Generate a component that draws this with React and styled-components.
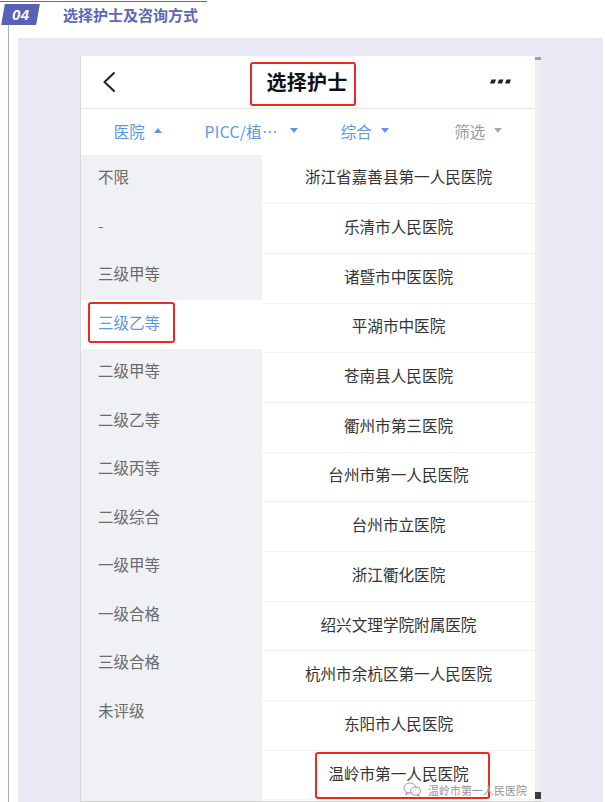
import React from 'react';
import styled, { createGlobalStyle, css } from 'styled-components';

const GlobalStyle = createGlobalStyle`
  html, body {
    margin: 0;
    padding: 0;
    background: #ffffff;
  }
  body {
    font-family: "Noto Sans CJK SC", "Noto Sans", sans-serif;
  }
  * {
    box-sizing: border-box;
  }
`;

const BLUE = '#5a98e6';

const Page = styled.div`
  width: 605px;
  height: 802px;
  overflow: hidden;
  padding-top: 1px;
  display: flex;
  flex-direction: column;
`;

const SectionHead = styled.div`
  width: 207px;
  border-top: 1.5px solid #5d68bd;
  display: flex;
  align-items: center;
  padding-top: 1.5px;
`;

const Badge = styled.div`
  width: 35px;
  height: 21px;
  margin-left: 3px;
  background: #5662b6;
  transform: skewX(-10deg);
  display: flex;
  align-items: center;
  justify-content: center;

  span {
    transform: skewX(10deg);
    color: #ffffff;
    font-family: "Liberation Sans", Arial, sans-serif;
    font-style: italic;
    font-weight: bold;
    font-size: 15px;
    letter-spacing: 0.5px;
  }
`;

const SectionTitle = styled.h2`
  margin: 0 0 0 25px;
  font-size: 15px;
  font-weight: bold;
  color: #5b66b9;
  line-height: 21px;
`;

const Rail = styled.div`
  flex: 1;
  margin-left: 8px;
  border-left: 1px solid #a4abe0;
  padding: 13px 0 0 9px;
  display: flex;
`;

const Panel = styled.div`
  width: 585px;
  background: #e8e9f4;
  padding: 18px 0 0 62px;
  display: flex;
`;

const Phone = styled.div`
  display: flex;
  height: 746px;
  border-bottom: 1px solid #cfcfcf;
  background: #ffffff;
`;

const Screen = styled.div`
  position: relative;
  width: 455px;
  border-left: 1px solid #d9d9d9;
  background: #ffffff;
  display: flex;
  flex-direction: column;
  overflow: hidden;
`;

const Scrollbar = styled.div`
  position: relative;
  width: 6px;
  background: #efefef;
  display: flex;
  flex-direction: column;
  justify-content: space-between;
  padding: 1px 0 2px;

  &::before {
    content: '';
    height: 3px;
    background: #a0a0a0;
  }
  &::after {
    content: '';
    height: 7px;
    background: #3a3a3a;
  }
`;

const NavBar = styled.div`
  height: 53px;
  border-bottom: 1px solid #e6e6e6;
  display: grid;
  grid-template-columns: 1fr auto 1fr;
  align-items: center;
  padding: 0 23px 0 21px;
`;

const NavTitle = styled.h1`
  margin: 0;
  font-size: 20px;
  line-height: 28px;
  font-weight: bold;
  color: #111111;
  letter-spacing: 0.3px;
`;

const Marked = styled.span`
  position: relative;
  display: inline-block;

  &::after {
    content: '';
    position: absolute;
    top: ${(p) => p.$t}px;
    right: ${(p) => p.$r}px;
    bottom: ${(p) => p.$b}px;
    left: ${(p) => p.$l}px;
    border: 2px solid #ea2a1f;
    border-radius: 3px;
    pointer-events: none;
  }
`;

const NavSide = styled.div`
  display: flex;
  justify-content: ${(p) => (p.$end ? 'flex-end' : 'flex-start')};
  align-items: center;
`;

const FilterBar = styled.div`
  height: 46px;
  display: grid;
  grid-template-columns: repeat(4, 1fr);
  align-items: center;
  padding-bottom: 2px;
`;

const FilterItem = styled.div`
  display: flex;
  align-items: center;
  justify-content: center;
  gap: ${(p) => (p.$wide ? 12 : 9)}px;
  font-size: 15.5px;
  letter-spacing: ${(p) => (p.$wide ? 0.4 : 0)}px;
  color: ${(p) => (p.$muted ? '#9a9a9a' : BLUE)};
`;

const Caret = styled.i`
  width: 0;
  height: 0;
  border-left: 4px solid transparent;
  border-right: 4px solid transparent;
  ${(p) =>
    p.$up
      ? css`
          border-bottom: 5px solid ${p.$muted ? '#a8a8a8' : BLUE};
        `
      : css`
          border-top: 5px solid ${p.$muted ? '#a8a8a8' : BLUE};
        `}
`;

const Lists = styled.div`
  flex: 1;
  display: flex;
`;

const Levels = styled.ul`
  margin: 0;
  padding: 0;
  list-style: none;
  width: 181px;
  background: #f0f1f5;
`;

const Level = styled.li`
  height: 48.5px;
  display: flex;
  align-items: center;
  padding: 0 0 5px 17px;
  font-size: 15.5px;
  color: ${(p) => (p.$active ? BLUE : '#6a6a6a')};
  background: ${(p) => (p.$active ? '#ffffff' : 'transparent')};
`;

const Hospitals = styled.ul`
  margin: 0;
  padding: 0;
  list-style: none;
  flex: 1;
`;

const Hospital = styled.li`
  height: 49.7px;
  border-bottom: 1px solid #f1f1f1;
  display: flex;
  align-items: center;
  justify-content: center;
  padding-bottom: 5px;
  font-size: 15.6px;
  color: #333333;
`;

const Watermark = styled.div`
  position: absolute;
  right: 8px;
  bottom: 3px;
  display: flex;
  align-items: center;
  gap: 6px;
  font-size: 11px;
  color: rgba(110, 110, 110, 0.75);
  text-shadow: 0 0 1px #ffffff;
`;

const BackIcon = () => (
  <svg width="14" height="22" viewBox="0 0 14 22">
    <path d="M12 2 L2.5 11 L12 20" fill="none" stroke="#222" strokeWidth="2" strokeLinecap="round" strokeLinejoin="round" />
  </svg>
);

const MoreIcon = () => (
  <svg width="22" height="5" viewBox="0 0 22 5">
    <path d="M1.5 0.5h4.5l-1.5 4h-4.5z M9 0.5h4.5l-1.5 4h-4.5z M16.5 0.5h4.5l-1.5 4h-4.5z" fill="#222" />
  </svg>
);

const WechatIcon = () => (
  <svg width="19" height="15" viewBox="0 0 19 15" fill="none" stroke="rgba(120,120,120,0.7)" strokeWidth="1">
    <ellipse cx="7" cy="6" rx="6" ry="5" />
    <path d="M3.5 10.2 L2.8 12.8 L5.8 11" />
    <ellipse cx="12.5" cy="9" rx="5" ry="4.2" fill="rgba(255,255,255,0.6)" />
    <path d="M15.5 12.6 L16.2 14.4 L13.8 13.2" />
  </svg>
);

const levels = ['不限', '-', '三级甲等', '三级乙等', '二级甲等', '二级乙等', '二级丙等', '二级综合', '一级甲等', '一级合格', '三级合格', '未评级'];

const hospitals = [
  '浙江省嘉善县第一人民医院',
  '乐清市人民医院',
  '诸暨市中医医院',
  '平湖市中医院',
  '苍南县人民医院',
  '衢州市第三医院',
  '台州市第一人民医院',
  '台州市立医院',
  '浙江衢化医院',
  '绍兴文理学院附属医院',
  '杭州市余杭区第一人民医院',
  '东阳市人民医院',
  '温岭市第一人民医院',
];

export default function App() {
  return (
    <Page>
      <GlobalStyle />
      <SectionHead>
        <Badge>
          <span>04</span>
        </Badge>
        <SectionTitle>选择护士及咨询方式</SectionTitle>
      </SectionHead>
      <Rail>
        <Panel>
          <Phone>
            <Screen>
              <NavBar>
                <NavSide>
                  <BackIcon />
                </NavSide>
                <Marked $t={-6} $r={-8} $b={-10} $l={-16}>
                  <NavTitle>选择护士</NavTitle>
                </Marked>
                <NavSide $end>
                  <MoreIcon />
                </NavSide>
              </NavBar>
              <FilterBar>
                <FilterItem>
                  医院 <Caret $up />
                </FilterItem>
                <FilterItem $wide>
                  PICC/植… <Caret />
                </FilterItem>
                <FilterItem>
                  综合 <Caret />
                </FilterItem>
                <FilterItem $muted>
                  筛选 <Caret $muted />
                </FilterItem>
              </FilterBar>
              <Lists>
                <Levels>
                  {levels.map((name) => (
                    <Level key={name} $active={name === '三级乙等'}>
                      {name === '三级乙等' ? (
                        <Marked $t={-9} $r={-15} $b={-10} $l={-10}>
                          {name}
                        </Marked>
                      ) : (
                        name
                      )}
                    </Level>
                  ))}
                </Levels>
                <Hospitals>
                  {hospitals.map((name, i) =>
                    i === hospitals.length - 1 ? (
                      <Hospital key={name}>
                        <Marked $t={-10} $r={-21} $b={-15} $l={-13}>
                          {name}
                        </Marked>
                      </Hospital>
                    ) : (
                      <Hospital key={name}>{name}</Hospital>
                    )
                  )}
                </Hospitals>
              </Lists>
              <Watermark>
                <WechatIcon />
                温岭市第一人民医院
              </Watermark>
            </Screen>
            <Scrollbar />
          </Phone>
        </Panel>
      </Rail>
    </Page>
  );
}
